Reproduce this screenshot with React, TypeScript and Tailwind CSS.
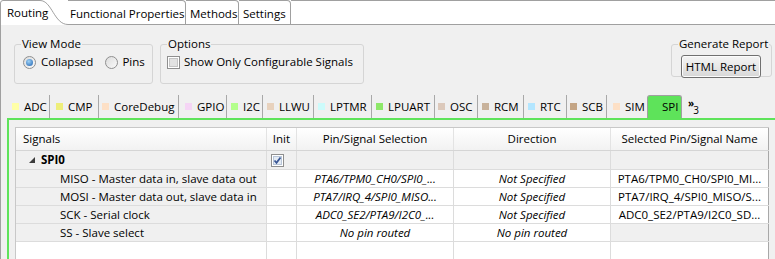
import React from "react";

const periph = [
  { name: "ADC", w: "w-[43px]", pl: "pl-[5px]", c: "bg-[#ffffa8]" },
  { name: "CMP", w: "w-[49px]", pl: "pl-[6px]", c: "bg-[#eeee7a]" },
  { name: "CoreDebug", w: "w-[80px]", pl: "pl-[3px]", c: "bg-[#fde0c6]" },
  { name: "GPIO", w: "w-[48px]", pl: "pl-[6px]", c: "bg-[#f5d5f5]" },
  { name: "I2C", w: "w-[36px]", pl: "pl-[4px]", c: "bg-[#b3ff8c]" },
  { name: "LLWU", w: "w-[51px]", pl: "pl-[4px]", c: "bg-[#e8d2bd]" },
  { name: "LPTMR", w: "w-[58px]", pl: "pl-[4px]", c: "bg-[#ccfbfb]" },
  { name: "LPUART", w: "w-[63px]", pl: "pl-[4px]", c: "bg-[#8ee869]" },
  { name: "OSC", w: "w-[43px]", pl: "pl-[3px]", c: "bg-[#dcc9bb]" },
  { name: "RCM", w: "w-[46px]", pl: "pl-[4px]", c: "bg-[#c8b29b]" },
  { name: "RTC", w: "w-[43px]", pl: "pl-[4px]", c: "bg-[#b3e6ff]" },
  { name: "SCB", w: "w-[40px]", pl: "pl-[3px]", c: "bg-[#c4a585]" },
];

const signals = [
  {
    name: "MISO - Master data in, slave data out",
    pin: "PTA6/TPM0_CH0/SPI0_...",
    dir: "Not Specified",
    sel: "PTA6/TPM0_CH0/SPI0_MI...",
  },
  {
    name: "MOSI - Master data out, slave data in",
    pin: "PTA7/IRQ_4/SPI0_MISO...",
    dir: "Not Specified",
    sel: "PTA7/IRQ_4/SPI0_MISO/S...",
  },
  {
    name: "SCK - Serial clock",
    pin: "ADC0_SE2/PTA9/I2C0_...",
    dir: "Not Specified",
    sel: "ADC0_SE2/PTA9/I2C0_SD...",
  },
  { name: "SS - Slave select", pin: "No pin routed", dir: "No pin routed", sel: "" },
];

const grid = "grid grid-cols-[251px_30px_157px_157px_158px]";

function Radio({ on }: { on?: boolean }) {
  return (
    <span className="w-[13px] h-[13px] rounded-full border border-[#8f8f8f] bg-linear-to-br from-[#dcdcdc] to-[#fafafa] flex items-center justify-center">
      {on && (
        <span className="w-[7px] h-[7px] rounded-full bg-[radial-gradient(circle_at_40%_35%,#9fd3f7,#1c5fae)]" />
      )}
    </span>
  );
}

function Check({ on }: { on?: boolean }) {
  return (
    <svg width="13" height="13" viewBox="0 0 13 13">
      <rect x="0.5" y="0.5" width="12" height="12" fill="#fff" stroke="#8f8f8f" />
      <rect x="2.5" y="2.5" width="8" height="8" fill={on ? "#e4ebf4" : "#e2e2e2"} stroke={on ? "#b9c6d8" : "#c4c4c4"} />
      {on && <path d="M3.5 6.5 L5.5 8.8 L9.5 3.5" fill="none" stroke="#3a5795" strokeWidth="1.8" />}
    </svg>
  );
}

export default function App() {
  return (
    <div className="w-[775px] h-[259px] overflow-hidden bg-white text-[11.5px] text-black font-['Open_Sans',sans-serif] flex flex-col">
      {/* editor tabs */}
      <div className="flex h-[25px] shrink-0">
        <div className="relative w-[68px]">
          <svg className="absolute inset-0" width="68" height="25">
            <path d="M0.5 25 V3 Q0.5 0.5 3 0.5 H40 C52 0.5 54 24.5 68 24.5" fill="none" stroke="#a0a0a0" />
          </svg>
          <span className="relative block pl-[7px] pt-[5px] leading-[16px]">Routing</span>
        </div>
        <div className="w-[118px] pl-[2px] pt-[5px] leading-[16px] border-t border-r border-b border-[#a0a0a0] rounded-tr-[4px]">
          Functional Properties
        </div>
        <div className="w-[53px] pl-[4px] pt-[5px] leading-[16px] border-t border-r border-b border-[#a0a0a0] rounded-tr-[4px]">
          Methods
        </div>
        <div className="w-[52px] pl-[4px] pt-[5px] leading-[16px] border-t border-r border-b border-[#a0a0a0] rounded-tr-[4px]">
          Settings
        </div>
        <div className="flex-1 border-t border-b border-[#a0a0a0]" />
      </div>

      <div className="flex-1 min-h-0 flex flex-col bg-[#f0f0f0] border-l border-[#a0a0a0]">
        {/* option groups */}
        <div className="flex items-start pl-[13px] pt-[12px]">
          <fieldset className="w-[139px] h-[47px] border border-[#d5d5d5] rounded-[3px]">
            <legend className="ml-[6px] px-[1px] leading-[14px]">View Mode</legend>
            <div className="flex items-center h-[14px] mt-[4px] ml-[8px]">
              <Radio on />
              <span className="ml-[5px]">Collapsed</span>
              <span className="ml-[12px]">
                <Radio />
              </span>
              <span className="ml-[4px]">Pins</span>
            </div>
          </fieldset>
          <fieldset className="ml-[7px] w-[204px] h-[47px] border border-[#d5d5d5] rounded-[3px]">
            <legend className="ml-[6px] px-[1px] leading-[14px]">Options</legend>
            <div className="flex items-center h-[14px] mt-[4px] ml-[6px]">
              <Check />
              <span className="ml-[4px]">Show Only Configurable Signals</span>
            </div>
          </fieldset>
          <fieldset className="ml-auto mr-[3px] w-[101px] h-[40px] border border-[#d5d5d5] rounded-[3px]">
            <legend className="ml-[6px] px-[1px] leading-[14px]">Generate Report</legend>
            <button className="mt-[4px] ml-[9px] w-[80px] h-[23px] border border-[#707070] rounded-[3px] bg-linear-to-b from-[#f4f4f4] via-[#e8e8e8] to-[#d6d6d6] shadow-[inset_0_0_0_1px_#fcfcfc] leading-[20px]">
              HTML Report
            </button>
          </fieldset>
        </div>

        {/* peripheral tabs */}
        <div className="flex h-[23px] mt-[11px] pl-[6px] shrink-0">
          {periph.map((p) => (
            <div key={p.name} className={`flex items-center gap-[5px] border-r border-[#a8a8a8] ${p.w} ${p.pl}`}>
              <span className={`w-[7px] h-[7px] ${p.c}`} />
              <span>{p.name}</span>
            </div>
          ))}
          <div className="flex items-center gap-[5px] w-[40px] pl-[6px]">
            <span className="w-[7px] h-[7px] bg-[#fde0c6]" />
            <span>SIM</span>
          </div>
          <div className="w-[35px] flex items-center pl-[14px] bg-[#5ee35a] border border-b-0 border-[#a0a0a0] rounded-t-[3px]">
            SPI
          </div>
          <div className="ml-[6px] flex items-start pt-[3px] text-[10px]">
            <span className="leading-none font-bold">»</span>
            <span className="leading-none mt-[7px] -ml-[1px]">3</span>
          </div>
        </div>

        {/* signals table */}
        <div className="flex-1 min-h-0 ml-[6px] border-l-2 border-t-2 border-[#5ee35a] pl-[6px] pr-[6px] pt-[7px] flex flex-col">
          <div className="flex-1 flex flex-col bg-white border-l border-t border-[#c8c8c8]">
            <div className={`${grid} h-[23px] bg-linear-to-b from-white to-[#f2f2f2] border-b border-[#d5d5d5]`}>
              <div className="border-r border-[#e3e3e3] pl-[7px] flex items-center">Signals</div>
              <div className="border-r border-[#e3e3e3] flex items-center justify-center">Init</div>
              <div className="border-r border-[#e3e3e3] flex items-center justify-center">Pin/Signal Selection</div>
              <div className="border-r border-[#e3e3e3] flex items-center justify-center">Direction</div>
              <div className="border-r border-[#a8a8a8] flex items-center justify-center">Selected Pin/Signal Name</div>
            </div>

            <div className={`${grid} h-[19px] bg-[#f0f0f0] border-b border-[#dcdcdc]`}>
              <div className="border-r border-[#dcdcdc] pl-[13px] flex items-center">
                <svg width="6" height="6" viewBox="0 0 6 6">
                  <path d="M6 0 V6 H0 Z" fill="#3c3c3c" />
                </svg>
                <span className="ml-[6px] font-bold">SPI0</span>
              </div>
              <div className="border-r border-[#dcdcdc] flex items-center pl-[4px]">
                <Check on />
              </div>
              <div className="border-r border-[#dcdcdc]" />
              <div className="border-r border-[#dcdcdc]" />
              <div className="border-r border-[#a8a8a8]" />
            </div>

            {signals.map((s, i) => (
              <div key={s.name} className={`${grid} h-[18px] border-b border-[#dcdcdc]`}>
                <div className="bg-[#f0f0f0] border-r border-[#dcdcdc] pl-[44px] flex items-center whitespace-nowrap">
                  {s.name}
                </div>
                <div className="border-r border-[#dcdcdc]" />
                <div className="border-r border-[#dcdcdc] flex items-center justify-center italic whitespace-nowrap overflow-hidden">
                  {s.pin}
                </div>
                <div className="border-r border-[#dcdcdc] flex items-center justify-center italic whitespace-nowrap">
                  {s.dir}
                </div>
                <div
                  className={`border-r border-[#a8a8a8] flex items-center justify-center whitespace-nowrap overflow-hidden ${
                    i === 3 ? "bg-[#f0f0f0]" : ""
                  }`}
                >
                  {s.sel}
                </div>
              </div>
            ))}

            <div className={`${grid} flex-1`}>
              <div className="border-r border-[#dcdcdc]" />
              <div className="border-r border-[#dcdcdc]" />
              <div className="border-r border-[#dcdcdc]" />
              <div className="border-r border-[#dcdcdc]" />
              <div className="border-r border-[#a8a8a8]" />
            </div>
          </div>
        </div>
      </div>
    </div>
  );
}
